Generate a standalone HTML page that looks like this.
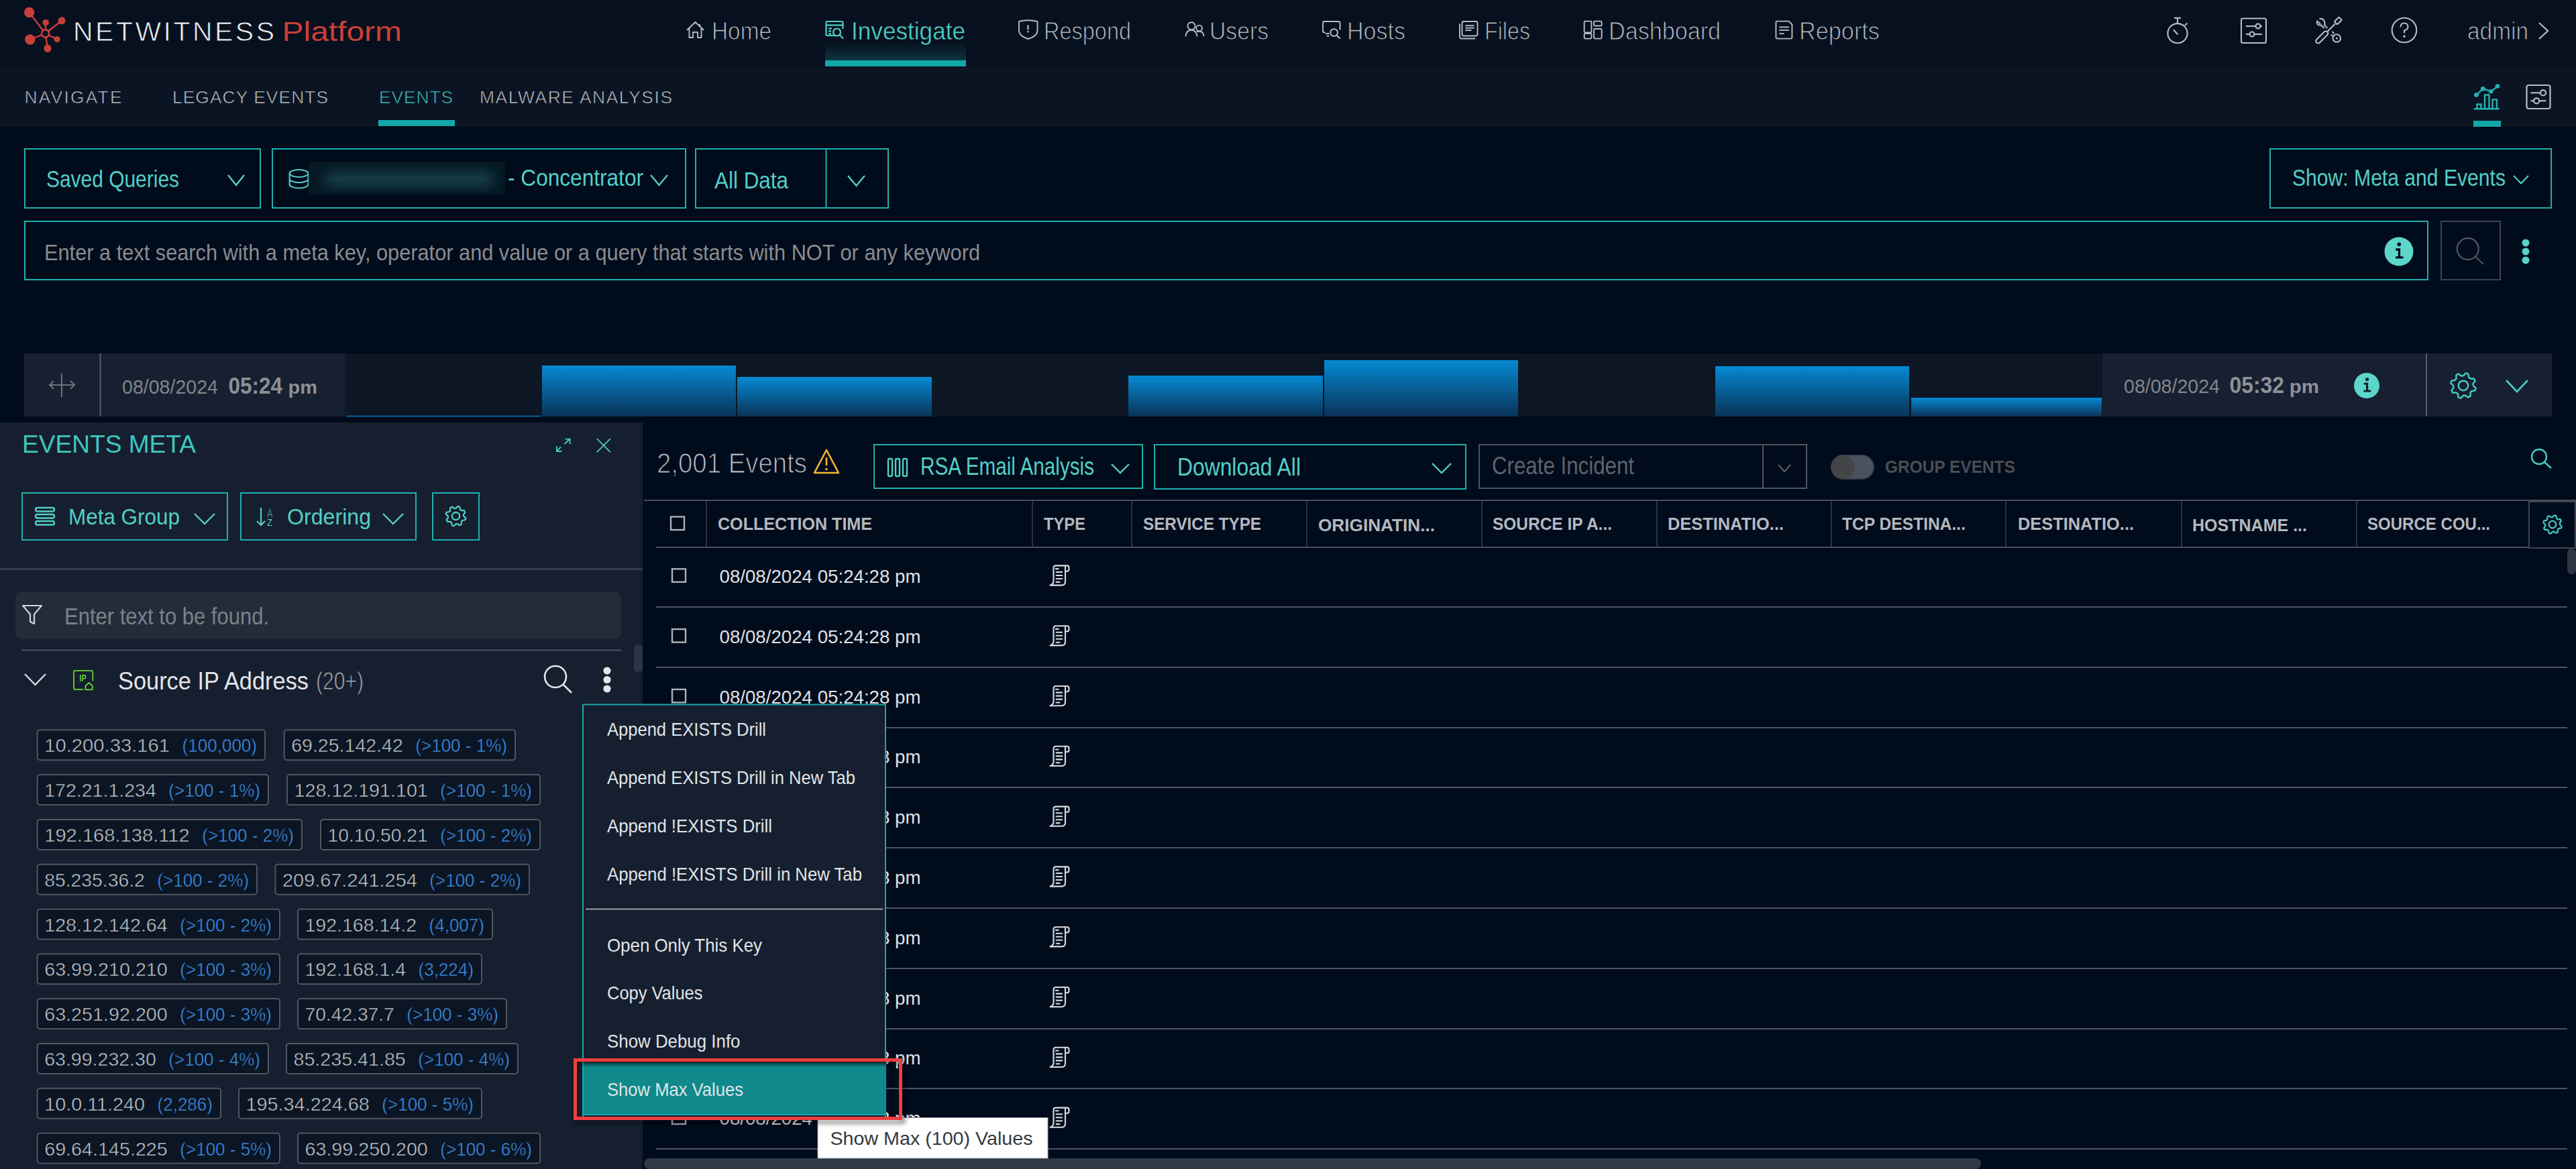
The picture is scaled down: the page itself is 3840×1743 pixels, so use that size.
<!DOCTYPE html>
<html><head><meta charset="utf-8"><title>NetWitness Platform - Events</title>
<style>html,body{margin:0;padding:0;background:#000b1b;overflow:hidden;font-family:"Liberation Sans",sans-serif}svg{display:block}</style></head>
<body><svg width="3840" height="1743" viewBox="0 0 3840 1743">
<rect x="0" y="0" width="3840" height="1743" fill="#000b1b"/>
<rect x="0" y="0" width="3840" height="99" fill="#07101e"/>
<rect x="0" y="99" width="3840" height="90" fill="#0b1423"/>
<g fill="#c9403a" stroke="#c9403a">
<line x1="67.6" y1="50" x2="43.6" y2="18.5" stroke-width="2.4"/>
<circle cx="43.6" cy="18.5" r="7.7" stroke="none"/>
<line x1="67.6" y1="50" x2="68.1" y2="33.7" stroke-width="2.4"/>
<circle cx="68.1" cy="33.7" r="4.8" stroke="none"/>
<line x1="67.6" y1="50" x2="92" y2="30.8" stroke-width="2.4"/>
<circle cx="92" cy="30.8" r="5.5" stroke="none"/>
<line x1="67.6" y1="50" x2="44.8" y2="59" stroke-width="2.4"/>
<circle cx="44.8" cy="59" r="7.7" stroke="none"/>
<line x1="67.6" y1="50" x2="85" y2="58.5" stroke-width="2.4"/>
<circle cx="85" cy="58.5" r="4.6" stroke="none"/>
<line x1="67.6" y1="50" x2="71" y2="72.2" stroke-width="2.4"/>
<circle cx="71" cy="72.2" r="5.6" stroke="none"/>
<circle cx="67.6" cy="50" r="5.6" fill="#07101e" stroke-width="2.6"/>
</g>
<text x="109" y="61" font-family="&quot;Liberation Sans&quot;, sans-serif" font-size="41" fill="#f2f2f2" textLength="300" lengthAdjust="spacing" stroke="#07101e" stroke-width="0.9">NETWITNESS</text>
<text x="420.5" y="61" font-family="&quot;Liberation Sans&quot;, sans-serif" font-size="41" fill="#cc3f36" textLength="178.5" lengthAdjust="spacingAndGlyphs">Platform</text>
<defs><linearGradient id="glow" x1="0" y1="0" x2="0" y2="1"><stop offset="0" stop-color="#07101e" stop-opacity="1"/><stop offset="1" stop-color="#0c3440" stop-opacity="1"/></linearGradient><linearGradient id="bar" x1="0" y1="0" x2="0" y2="1"><stop offset="0" stop-color="#058ad3"/><stop offset="1" stop-color="#0a3358"/></linearGradient></defs>
<rect x="1230" y="63" width="210" height="27" fill="url(#glow)"/>
<rect x="1230" y="90" width="210" height="9" fill="#14a7aa"/>
<text x="1061" y="59" font-family="&quot;Liberation Sans&quot;, sans-serif" font-size="36.6" fill="#b9bcc2" textLength="89" lengthAdjust="spacingAndGlyphs" stroke="#07101e" stroke-width="1.1">Home</text>
<text x="1269" y="59" font-family="&quot;Liberation Sans&quot;, sans-serif" font-size="36.6" fill="#4fd1c8" textLength="170" lengthAdjust="spacingAndGlyphs" stroke="#07101e" stroke-width="0.5">Investigate</text>
<text x="1556" y="59" font-family="&quot;Liberation Sans&quot;, sans-serif" font-size="36.6" fill="#b9bcc2" textLength="130" lengthAdjust="spacingAndGlyphs" stroke="#07101e" stroke-width="1.1">Respond</text>
<text x="1803" y="59" font-family="&quot;Liberation Sans&quot;, sans-serif" font-size="36.6" fill="#b9bcc2" textLength="88" lengthAdjust="spacingAndGlyphs" stroke="#07101e" stroke-width="1.1">Users</text>
<text x="2008" y="59" font-family="&quot;Liberation Sans&quot;, sans-serif" font-size="36.6" fill="#b9bcc2" textLength="87" lengthAdjust="spacingAndGlyphs" stroke="#07101e" stroke-width="1.1">Hosts</text>
<text x="2213" y="59" font-family="&quot;Liberation Sans&quot;, sans-serif" font-size="36.6" fill="#b9bcc2" textLength="68" lengthAdjust="spacingAndGlyphs" stroke="#07101e" stroke-width="1.1">Files</text>
<text x="2398" y="59" font-family="&quot;Liberation Sans&quot;, sans-serif" font-size="36.6" fill="#b9bcc2" textLength="167" lengthAdjust="spacingAndGlyphs" stroke="#07101e" stroke-width="1.1">Dashboard</text>
<text x="2682" y="59" font-family="&quot;Liberation Sans&quot;, sans-serif" font-size="36.6" fill="#b9bcc2" textLength="120" lengthAdjust="spacingAndGlyphs" stroke="#07101e" stroke-width="1.1">Reports</text>
<path d="M1024 45 L1036.5 33 L1049 45 M1027.5 42 V56 H1033 V48 H1040 V56 H1045.5 V42 M1043 36 V39" fill="none" stroke="#b9bcc2" stroke-width="1.9" stroke-linejoin="round"/>
<g fill="none" stroke="#4fd1c8" stroke-width="2.2"><path d="M1246 53 H1233 Q1231.5 53 1231.5 51 V34 Q1231.5 32 1233.5 32 H1254.5 Q1256.5 32 1256.5 34 V43"/><line x1="1232" y1="37.5" x2="1256" y2="37.5"/><line x1="1235" y1="42.5" x2="1240" y2="42.5"/><line x1="1235" y1="46.5" x2="1239" y2="46.5"/><line x1="1235" y1="50.5" x2="1239" y2="50.5"/><circle cx="1247.5" cy="48" r="5.5"/><line x1="1251.5" y1="52" x2="1257" y2="57.5"/></g>
<path d="M1519 32 Q1532.7 28.5 1546.5 32 V45 Q1546.5 54 1532.7 58 Q1519 54 1519 45 Z" fill="none" stroke="#b9bcc2" stroke-width="1.9" stroke-linejoin="round"/><line x1="1532.4" y1="37.5" x2="1532.4" y2="44.5" stroke="#b9bcc2" stroke-width="2.2"/><circle cx="1532.4" cy="47.3" r="1.3" fill="#b9bcc2"/>
<g fill="none" stroke="#b9bcc2" stroke-width="1.9"><circle cx="1776" cy="38.8" r="5.6"/><path d="M1767.5 54.5 Q1768 45 1776 45 Q1784 45 1784.5 54.5"/><circle cx="1787.7" cy="42" r="4.4"/><path d="M1784 47 Q1786 46.8 1788 46.8 Q1794 47 1794.5 54"/></g>
<g fill="none" stroke="#b9bcc2" stroke-width="1.9"><path d="M1975.5 48.5 H1974.5 Q1972 48.5 1972 46 V34.5 Q1972 32 1974.5 32 H1995 Q1997.5 32 1997.5 34.5 V44.5"/><line x1="1976" y1="50" x2="1981.5" y2="50"/><line x1="1977.5" y1="53.5" x2="1981.5" y2="53.5"/><circle cx="1988.6" cy="48.6" r="5.4"/><line x1="1992.5" y1="52.5" x2="1997.5" y2="57.5"/></g>
<g fill="none" stroke="#b9bcc2" stroke-width="1.9"><rect x="2179.5" y="32" width="23" height="21.5" rx="2.5"/><path d="M2176 35.5 V55 Q2176 57.5 2178.5 57.5 H2199"/><line x1="2184.3" y1="38.2" x2="2197.6" y2="38.2"/><line x1="2184.3" y1="41.7" x2="2197.6" y2="41.7"/><line x1="2184.3" y1="45.2" x2="2193.4" y2="45.2"/></g>
<g fill="none" stroke="#b9bcc2" stroke-width="1.9"><rect x="2361.6" y="31.6" width="10.8" height="16.8" rx="1.5"/><rect x="2361.6" y="50" width="10.8" height="7.6" rx="1.5"/><rect x="2376" y="31.6" width="11.6" height="6.9" rx="1.5"/><rect x="2376" y="43" width="11.6" height="14.6" rx="1.5"/></g>
<g fill="none" stroke="#b9bcc2" stroke-width="1.9"><path d="M2649.5 31.6 H2666.5 L2671.4 36.5 V55.5 Q2671.4 57.6 2669.4 57.6 H2649.5 Q2647.4 57.6 2647.4 55.5 V33.7 Q2647.4 31.6 2649.5 31.6 Z"/><line x1="2652.3" y1="40.5" x2="2666.8" y2="40.5"/><line x1="2652.3" y1="45" x2="2666.8" y2="45"/><line x1="2652.3" y1="50.1" x2="2659.5" y2="50.1"/></g>
<g fill="none" stroke="#b9bcc2" stroke-width="2.1"><circle cx="3246" cy="49.7" r="14.6"/><line x1="3241" y1="26.8" x2="3251" y2="26.8"/><line x1="3246" y1="26.8" x2="3246" y2="35"/><line x1="3257" y1="38" x2="3260.5" y2="34.5"/><line x1="3240" y1="44.5" x2="3246.5" y2="51.5"/><rect x="3341" y="27.5" width="37" height="36.5" rx="2.5"/><line x1="3348" y1="39" x2="3372" y2="39"/><circle cx="3366" cy="39" r="3.5" fill="#07101e"/><line x1="3348" y1="51" x2="3372" y2="51"/><circle cx="3357" cy="51" r="3.5" fill="#07101e"/><rect x="-11.4" y="-3.3" width="22.8" height="6.6" rx="3.3" transform="translate(3461.3 55.5) rotate(-45)"/><line x1="3469.5" y1="47" x2="3481" y2="35.5"/><rect x="-4.8" y="-3" width="9.6" height="6" rx="1" transform="translate(3485.3 31) rotate(-45)"/><path d="M3457.5 28 Q3462.5 27 3465 31.5 Q3466 35 3465 37.5 L3469.5 42 M3464.5 42 L3460 37.5 Q3456 38.5 3454 35.5 Q3453 33.5 3454.5 31.5 L3459 36"/><line x1="3476.5" y1="47" x2="3479.5" y2="50"/><line x1="3475" y1="51.5" x2="3478" y2="54.5"/><circle cx="3483.3" cy="57" r="5.8"/><circle cx="3584" cy="45" r="18.3"/><path d="M3578.5 40.5 Q3578.5 34.5 3584 34.5 Q3589.5 34.5 3589.5 40 Q3589.5 44 3584 45.5 V49.5"/></g><circle cx="3483.3" cy="57" r="1.6" fill="#b9bcc2"/><circle cx="3584" cy="54.2" r="1.7" fill="#b9bcc2"/>
<text x="3678" y="59" font-family="&quot;Liberation Sans&quot;, sans-serif" font-size="36.6" fill="#b9bcc2" textLength="91" lengthAdjust="spacingAndGlyphs" stroke="#07101e" stroke-width="1.1">admin</text>
<path d="M3785 34 L3798 46 L3785 58" fill="none" stroke="#b9bcc2" stroke-width="2.2"/>
<text x="36.5" y="154" font-family="&quot;Liberation Sans&quot;, sans-serif" font-size="26.4" fill="#c4c8cd" textLength="145" lengthAdjust="spacing" stroke="#0b1423" stroke-width="0.7">NAVIGATE</text>
<text x="257" y="154" font-family="&quot;Liberation Sans&quot;, sans-serif" font-size="26.4" fill="#c4c8cd" textLength="232" lengthAdjust="spacing" stroke="#0b1423" stroke-width="0.7">LEGACY EVENTS</text>
<text x="565" y="154" font-family="&quot;Liberation Sans&quot;, sans-serif" font-size="26.4" fill="#3fc6c1" textLength="110" lengthAdjust="spacing" stroke="#0b1423" stroke-width="0.7">EVENTS</text>
<text x="715" y="154" font-family="&quot;Liberation Sans&quot;, sans-serif" font-size="26.4" fill="#c4c8cd" textLength="287" lengthAdjust="spacing" stroke="#0b1423" stroke-width="0.7">MALWARE ANALYSIS</text>
<rect x="564" y="179" width="114" height="9" fill="#14a7aa"/>
<rect x="3669.5" y="99" width="1.2" height="90" fill="#08111e"/>
<g fill="none" stroke="#22b3b0" stroke-width="2.4"><polyline points="3691.5,141.6 3701.3,132.4 3713.3,136.2 3723,128.6"/><line x1="3688.8" y1="162.3" x2="3724.7" y2="162.3" stroke-linecap="round"/><path d="M3692.5 162 V155.5 H3698.5 V162 M3704 162 V141.5 H3710.5 V162 M3715.5 162 V148.5 H3722 V162"/></g><g fill="#22b3b0"><circle cx="3691.5" cy="141.6" r="3.3"/><circle cx="3701.3" cy="132.4" r="3.3"/><circle cx="3713.3" cy="136.2" r="3.3"/><circle cx="3723" cy="128.6" r="3.3"/></g>
<rect x="3687" y="180" width="41" height="9" fill="#14a7aa"/>
<g fill="none" stroke="#b9bcc2" stroke-width="2.2"><rect x="3766.5" y="127" width="35" height="35" rx="3"/><line x1="3772.5" y1="138.4" x2="3795.3" y2="138.4"/><circle cx="3791" cy="138.4" r="4" fill="#0b1423"/><line x1="3772.5" y1="150.3" x2="3795.3" y2="150.3"/><circle cx="3781.2" cy="150.3" r="4" fill="#0b1423"/></g>
<rect x="37.0" y="222.0" width="351" height="88" fill="none" stroke="#1fb0ae" stroke-width="2"/>
<text x="69" y="278.6" font-family="&quot;Liberation Sans&quot;, sans-serif" font-size="35.7" fill="#52cfc6" textLength="198" lengthAdjust="spacingAndGlyphs">Saved Queries</text>
<polyline points="340,261 352.0,276 364,261" fill="none" stroke="#52cfc6" stroke-width="2.4"/>
<rect x="406.0" y="222.0" width="616" height="88" fill="none" stroke="#1fb0ae" stroke-width="2"/>
<g fill="none" stroke="#52cfc6" stroke-width="2.1"><ellipse cx="445.6" cy="258.5" rx="14" ry="5.5"/><path d="M431.6 258.5 V275 A14 5.5 0 0 0 459.6 275 V258.5 M431.6 266.7 A14 5.5 0 0 0 459.6 266.7"/></g>
<defs><filter id="blur" x="-20%" y="-50%" width="140%" height="200%"><feGaussianBlur stdDeviation="9"/></filter></defs>
<clipPath id="bclip"><rect x="460" y="241" width="293" height="49"/></clipPath>
<rect x="460" y="241" width="293" height="49" fill="#061822"/>
<g filter="url(#blur)" clip-path="url(#bclip)"><rect x="485" y="256" width="250" height="22" fill="#17414c"/></g>
<text x="757" y="277" font-family="&quot;Liberation Sans&quot;, sans-serif" font-size="35.7" fill="#52cfc6" textLength="202" lengthAdjust="spacingAndGlyphs">- Concentrator</text>
<polyline points="970,261 982.5,276 995,261" fill="none" stroke="#52cfc6" stroke-width="2.4"/>
<rect x="1037.0" y="222.0" width="287" height="88" fill="none" stroke="#1fb0ae" stroke-width="2"/>
<line x1="1231.5" y1="221" x2="1231.5" y2="311" stroke="#1fb0ae" stroke-width="2"/>
<text x="1065" y="281" font-family="&quot;Liberation Sans&quot;, sans-serif" font-size="35.7" fill="#52cfc6" textLength="110" lengthAdjust="spacingAndGlyphs">All Data</text>
<polyline points="1264,262 1276.5,277 1289,262" fill="none" stroke="#52cfc6" stroke-width="2.4"/>
<rect x="3384.0" y="222.0" width="419" height="88" fill="none" stroke="#1fb0ae" stroke-width="2"/>
<text x="3417" y="276.7" font-family="&quot;Liberation Sans&quot;, sans-serif" font-size="35.7" fill="#52cfc6" textLength="318" lengthAdjust="spacingAndGlyphs">Show: Meta and Events</text>
<polyline points="3747,262 3758.0,273.5 3769,262" fill="none" stroke="#52cfc6" stroke-width="2.2"/>
<rect x="37.0" y="330.0" width="3582" height="87" fill="none" stroke="#1fb0ae" stroke-width="2"/>
<text x="66" y="388" font-family="&quot;Liberation Sans&quot;, sans-serif" font-size="33.7" fill="#8a8c90" textLength="1395" lengthAdjust="spacingAndGlyphs">Enter a text search with a meta key, operator and value or a query that starts with NOT or any keyword</text>
<circle cx="3576" cy="375" r="21.5" fill="#5cd5cb"/>
<g fill="none" stroke="#000b1b" stroke-width="3.3" stroke-linecap="round"><path d="M3572.5 372 H3576.5 V383.8 M3572.3 383.8 H3581.3"/></g><circle cx="3576.3" cy="364.3" r="2.8" fill="#000b1b"/>
<rect x="3639.0" y="330.0" width="88" height="87" fill="none" stroke="#3c4450" stroke-width="2"/>
<g fill="none" stroke="#50565e" stroke-width="2.2"><circle cx="3678.8" cy="371.2" r="16"/><line x1="3690.5" y1="383" x2="3702" y2="394"/></g>
<circle cx="3765" cy="362" r="5.5" fill="#5ad2c9"/>
<circle cx="3765" cy="375" r="5.5" fill="#5ad2c9"/>
<circle cx="3765" cy="388" r="5.5" fill="#5ad2c9"/>
<rect x="36" y="527" width="3768" height="94" fill="#0c1624"/>
<rect x="36" y="527" width="478" height="94" fill="#172030"/>
<line x1="149.5" y1="527" x2="149.5" y2="621" stroke="#5a5f67" stroke-width="2"/>
<g fill="none" stroke="#6e737b" stroke-width="2"><line x1="74" y1="574" x2="111" y2="574"/><line x1="92" y1="557" x2="92" y2="592"/><polyline points="80,568 74,574 80,580"/><polyline points="105,568 111,574 105,580"/></g>
<text x="182" y="586.5" font-family="&quot;Liberation Sans&quot;, sans-serif" font-size="30.0" fill="#80858c" textLength="143" lengthAdjust="spacingAndGlyphs">08/08/2024</text>
<text x="340.5" y="586.5" font-family="&quot;Liberation Sans&quot;, sans-serif" font-size="35.0" fill="#8c9097" font-weight="700" textLength="80.5" lengthAdjust="spacingAndGlyphs">05:24</text>
<text x="429.5" y="586.5" font-family="&quot;Liberation Sans&quot;, sans-serif" font-size="28.0" fill="#8c9097" font-weight="700" textLength="43.5" lengthAdjust="spacingAndGlyphs">pm</text>
<rect x="808" y="545" width="289" height="76" fill="url(#bar)"/>
<rect x="1099" y="562" width="290" height="59" fill="url(#bar)"/>
<rect x="1682" y="560" width="290" height="61" fill="url(#bar)"/>
<rect x="1974" y="537" width="289" height="84" fill="url(#bar)"/>
<rect x="2557" y="546" width="289" height="75" fill="url(#bar)"/>
<rect x="2849" y="593" width="284" height="28" fill="url(#bar)"/>
<line x1="516" y1="620.5" x2="806" y2="620.5" stroke="#0a7bc0" stroke-width="1.5"/>
<rect x="3134" y="527" width="670" height="94" fill="#172030"/>
<line x1="3617" y1="527" x2="3617" y2="621" stroke="#5a5f67" stroke-width="2"/>
<text x="3166" y="586" font-family="&quot;Liberation Sans&quot;, sans-serif" font-size="30.0" fill="#80858c" textLength="143" lengthAdjust="spacingAndGlyphs">08/08/2024</text>
<text x="3323.6" y="586" font-family="&quot;Liberation Sans&quot;, sans-serif" font-size="35.0" fill="#8c9097" font-weight="700" textLength="81.4" lengthAdjust="spacingAndGlyphs">05:32</text>
<text x="3412.7" y="586" font-family="&quot;Liberation Sans&quot;, sans-serif" font-size="28.0" fill="#8c9097" font-weight="700" textLength="44.3" lengthAdjust="spacingAndGlyphs">pm</text>
<circle cx="3528" cy="575" r="19" fill="#5cd5cb"/>
<g fill="none" stroke="#172030" stroke-width="3.1" stroke-linecap="round"><path d="M3525 572 H3528.6 V583 M3524.6 583 H3533"/></g><circle cx="3528.6" cy="565.5" r="2.6" fill="#172030"/>
<polygon points="3686.8,575.0 3690.6,578.7 3689.6,582.3 3684.3,583.2 3682.5,585.5 3682.6,590.8 3679.3,592.6 3674.9,589.5 3672.0,589.8 3668.3,593.6 3664.7,592.6 3663.8,587.3 3661.5,585.5 3656.2,585.6 3654.4,582.3 3657.5,577.9 3657.2,575.0 3653.4,571.3 3654.4,567.7 3659.7,566.8 3661.5,564.5 3661.4,559.2 3664.7,557.4 3669.1,560.5 3672.0,560.2 3675.7,556.4 3679.3,557.4 3680.2,562.7 3682.5,564.5 3687.8,564.4 3689.6,567.7 3686.5,572.1" fill="none" stroke="#45cbc4" stroke-width="2.4" stroke-linejoin="round"/><circle cx="3672" cy="575" r="7.2" fill="none" stroke="#45cbc4" stroke-width="2.4"/>
<polyline points="3736,567 3752.0,584 3768,567" fill="none" stroke="#45cbc4" stroke-width="2.6"/>
<rect x="0" y="630" width="958" height="1113" fill="#161f2f"/>
<text x="33" y="674.6" font-family="&quot;Liberation Sans&quot;, sans-serif" font-size="37.7" fill="#3fc6c1" textLength="259" lengthAdjust="spacingAndGlyphs">EVENTS META</text>
<g fill="none" stroke="#45cbc4" stroke-width="1.8"><line x1="830.5" y1="672" x2="836" y2="666.5"/><polyline points="830,665 830,673 837.5,673"/><line x1="841.5" y1="662" x2="849" y2="655"/><polyline points="842.5,654.6 849.6,654.6 849.6,662"/><line x1="889.8" y1="654.2" x2="909.8" y2="674.2"/><line x1="909.8" y1="654.2" x2="889.8" y2="674.2"/></g>
<rect x="33.0" y="735.0" width="306" height="70" fill="none" stroke="#1fb0ae" stroke-width="2"/>
<g fill="none" stroke="#52cfc6" stroke-width="2.4"><rect x="53" y="757" width="28" height="5.5" rx="2.7"/><rect x="53" y="767" width="28" height="5.5" rx="2.7"/><rect x="53" y="777" width="28" height="5.5" rx="2.7"/></g>
<text x="102" y="781.8" font-family="&quot;Liberation Sans&quot;, sans-serif" font-size="34.0" fill="#52cfc6" textLength="166" lengthAdjust="spacingAndGlyphs">Meta Group</text>
<polyline points="290,766 305.0,781 320,766" fill="none" stroke="#52cfc6" stroke-width="2.4"/>
<rect x="359.0" y="735.0" width="261" height="70" fill="none" stroke="#1fb0ae" stroke-width="2"/>
<g fill="none" stroke="#52cfc6" stroke-width="2.2"><line x1="389" y1="757" x2="389" y2="783"/><polyline points="383,777 389,783 395,777"/></g>
<text x="398" y="771.5" font-family="&quot;Liberation Sans&quot;, sans-serif" font-size="20" fill="#52cfc6" textLength="8.5" lengthAdjust="spacingAndGlyphs" stroke="#161f2f" stroke-width="0.8">A</text>
<text x="398" y="784" font-family="&quot;Liberation Sans&quot;, sans-serif" font-size="14" fill="#52cfc6" textLength="8" lengthAdjust="spacingAndGlyphs">Z</text>
<text x="428" y="781.8" font-family="&quot;Liberation Sans&quot;, sans-serif" font-size="34.0" fill="#52cfc6" textLength="125" lengthAdjust="spacingAndGlyphs">Ordering</text>
<polyline points="571,766 586.0,781 601,766" fill="none" stroke="#52cfc6" stroke-width="2.4"/>
<rect x="645.0" y="735.0" width="69" height="70" fill="none" stroke="#1fb0ae" stroke-width="2"/>
<polygon points="691.2,769.5 694.2,772.4 693.4,775.2 689.2,776.0 687.8,777.8 687.8,782.0 685.2,783.4 681.8,781.0 679.5,781.2 676.6,784.2 673.8,783.4 673.0,779.2 671.2,777.8 667.0,777.8 665.6,775.2 668.0,771.8 667.8,769.5 664.8,766.6 665.6,763.8 669.8,763.0 671.2,761.2 671.2,757.0 673.8,755.6 677.2,758.0 679.5,757.8 682.4,754.8 685.2,755.6 686.0,759.8 687.8,761.2 692.0,761.2 693.4,763.8 691.0,767.2" fill="none" stroke="#52cfc6" stroke-width="2.2" stroke-linejoin="round"/><circle cx="679.5" cy="769.5" r="5.7" fill="none" stroke="#52cfc6" stroke-width="2.2"/>
<line x1="0" y1="848.5" x2="958" y2="848.5" stroke="#404956" stroke-width="2"/>
<rect x="23" y="882" width="903" height="71" fill="#232c39" rx="10"/>
<path d="M34 903 H62 L51 916 V930 L45 927 V916 Z" fill="none" stroke="#d0d3d7" stroke-width="2.2" stroke-linejoin="round"/>
<text x="96" y="930.5" font-family="&quot;Liberation Sans&quot;, sans-serif" font-size="35.0" fill="#7c8189" textLength="305" lengthAdjust="spacingAndGlyphs">Enter text to be found.</text>
<line x1="32" y1="969.5" x2="926" y2="969.5" stroke="#4b5360" stroke-width="2"/>
<rect x="945" y="961" width="13" height="41" fill="#2c3541" rx="6"/>
<polyline points="37,1005 52.5,1021 68,1005" fill="none" stroke="#d5d8dc" stroke-width="2.4"/>
<path d="M124.5 1028 H112 Q110 1028 110 1026 V1002 Q110 1000 112 1000 H136.3 Q138.3 1000 138.3 1002 V1015.5" fill="none" stroke="#5fc13a" stroke-width="2"/>
<path d="M127.5 1028.3 V1022.5 L132.6 1018 L137.8 1022.5 V1028.3 Z" fill="none" stroke="#5fc13a" stroke-width="2" stroke-linejoin="round"/>
<text x="118.2" y="1016" font-family="&quot;Liberation Sans&quot;, sans-serif" font-size="14.5" fill="#5fc13a" font-weight="700" textLength="10.5" lengthAdjust="spacingAndGlyphs">IP</text>
<text x="176" y="1028.3" font-family="&quot;Liberation Sans&quot;, sans-serif" font-size="37.6" fill="#e3e5e8" textLength="284" lengthAdjust="spacingAndGlyphs">Source IP Address</text>
<text x="471" y="1028.3" font-family="&quot;Liberation Sans&quot;, sans-serif" font-size="37.6" fill="#a9adb2" textLength="71" lengthAdjust="spacingAndGlyphs" stroke="#161f2f" stroke-width="1">(20+)</text>
<g fill="none" stroke="#e3e5e8" stroke-width="2.6"><circle cx="828" cy="1009" r="16"/><line x1="840" y1="1021" x2="852" y2="1033"/></g>
<circle cx="905" cy="1000" r="5.6" fill="#e3e5e8"/>
<circle cx="905" cy="1013.5" r="5.6" fill="#e3e5e8"/>
<circle cx="905" cy="1027" r="5.6" fill="#e3e5e8"/>
<rect x="55.7" y="1088.3" width="339.3" height="45.0" fill="#0b1524" stroke="#50565e" stroke-width="2" rx="4"/>
<text x="66.2" y="1121.3" font-family="&quot;Liberation Sans&quot;, sans-serif" font-size="27.7" fill="#c0c3c7" textLength="186.9" lengthAdjust="spacingAndGlyphs" stroke="#0b1524" stroke-width="0.5">10.200.33.161</text>
<text x="271.6" y="1121.3" font-family="&quot;Liberation Sans&quot;, sans-serif" font-size="27.7" fill="#3d8fe6" textLength="111.4" lengthAdjust="spacingAndGlyphs" stroke="#0b1524" stroke-width="0.5">(100,000)</text>
<rect x="423.7" y="1088.3" width="344.3" height="45.0" fill="#0b1524" stroke="#50565e" stroke-width="2" rx="4"/>
<text x="434.2" y="1121.3" font-family="&quot;Liberation Sans&quot;, sans-serif" font-size="27.7" fill="#c0c3c7" textLength="166.6" lengthAdjust="spacingAndGlyphs" stroke="#0b1524" stroke-width="0.5">69.25.142.42</text>
<text x="619.3" y="1121.3" font-family="&quot;Liberation Sans&quot;, sans-serif" font-size="27.7" fill="#3d8fe6" textLength="136.7" lengthAdjust="spacingAndGlyphs" stroke="#0b1524" stroke-width="0.5">(&gt;100 - 1%)</text>
<rect x="55.7" y="1155.1" width="344.3" height="45.0" fill="#0b1524" stroke="#50565e" stroke-width="2" rx="4"/>
<text x="66.2" y="1188.1" font-family="&quot;Liberation Sans&quot;, sans-serif" font-size="27.7" fill="#c0c3c7" textLength="166.6" lengthAdjust="spacingAndGlyphs" stroke="#0b1524" stroke-width="0.5">172.21.1.234</text>
<text x="251.3" y="1188.1" font-family="&quot;Liberation Sans&quot;, sans-serif" font-size="27.7" fill="#3d8fe6" textLength="136.7" lengthAdjust="spacingAndGlyphs" stroke="#0b1524" stroke-width="0.5">(&gt;100 - 1%)</text>
<rect x="428.0" y="1155.1" width="377" height="45.0" fill="#0b1524" stroke="#50565e" stroke-width="2" rx="4"/>
<text x="438.5" y="1188.1" font-family="&quot;Liberation Sans&quot;, sans-serif" font-size="27.7" fill="#c0c3c7" textLength="199.3" lengthAdjust="spacingAndGlyphs" stroke="#0b1524" stroke-width="0.5">128.12.191.101</text>
<text x="656.3" y="1188.1" font-family="&quot;Liberation Sans&quot;, sans-serif" font-size="27.7" fill="#3d8fe6" textLength="136.7" lengthAdjust="spacingAndGlyphs" stroke="#0b1524" stroke-width="0.5">(&gt;100 - 1%)</text>
<rect x="55.7" y="1221.8999999999999" width="394.3" height="45.0" fill="#0b1524" stroke="#50565e" stroke-width="2" rx="4"/>
<text x="66.2" y="1254.8999999999999" font-family="&quot;Liberation Sans&quot;, sans-serif" font-size="27.7" fill="#c0c3c7" textLength="216.6" lengthAdjust="spacingAndGlyphs" stroke="#0b1524" stroke-width="0.5">192.168.138.112</text>
<text x="301.3" y="1254.8999999999999" font-family="&quot;Liberation Sans&quot;, sans-serif" font-size="27.7" fill="#3d8fe6" textLength="136.7" lengthAdjust="spacingAndGlyphs" stroke="#0b1524" stroke-width="0.5">(&gt;100 - 2%)</text>
<rect x="478.0" y="1221.8999999999999" width="327" height="45.0" fill="#0b1524" stroke="#50565e" stroke-width="2" rx="4"/>
<text x="488.5" y="1254.8999999999999" font-family="&quot;Liberation Sans&quot;, sans-serif" font-size="27.7" fill="#c0c3c7" textLength="149.3" lengthAdjust="spacingAndGlyphs" stroke="#0b1524" stroke-width="0.5">10.10.50.21</text>
<text x="656.3" y="1254.8999999999999" font-family="&quot;Liberation Sans&quot;, sans-serif" font-size="27.7" fill="#3d8fe6" textLength="136.7" lengthAdjust="spacingAndGlyphs" stroke="#0b1524" stroke-width="0.5">(&gt;100 - 2%)</text>
<rect x="55.7" y="1288.6999999999998" width="327.3" height="45.0" fill="#0b1524" stroke="#50565e" stroke-width="2" rx="4"/>
<text x="66.2" y="1321.6999999999998" font-family="&quot;Liberation Sans&quot;, sans-serif" font-size="27.7" fill="#c0c3c7" textLength="149.6" lengthAdjust="spacingAndGlyphs" stroke="#0b1524" stroke-width="0.5">85.235.36.2</text>
<text x="234.3" y="1321.6999999999998" font-family="&quot;Liberation Sans&quot;, sans-serif" font-size="27.7" fill="#3d8fe6" textLength="136.7" lengthAdjust="spacingAndGlyphs" stroke="#0b1524" stroke-width="0.5">(&gt;100 - 2%)</text>
<rect x="410.5" y="1288.6999999999998" width="378.5" height="45.0" fill="#0b1524" stroke="#50565e" stroke-width="2" rx="4"/>
<text x="421.0" y="1321.6999999999998" font-family="&quot;Liberation Sans&quot;, sans-serif" font-size="27.7" fill="#c0c3c7" textLength="200.8" lengthAdjust="spacingAndGlyphs" stroke="#0b1524" stroke-width="0.5">209.67.241.254</text>
<text x="640.3" y="1321.6999999999998" font-family="&quot;Liberation Sans&quot;, sans-serif" font-size="27.7" fill="#3d8fe6" textLength="136.7" lengthAdjust="spacingAndGlyphs" stroke="#0b1524" stroke-width="0.5">(&gt;100 - 2%)</text>
<rect x="55.7" y="1355.5" width="361.3" height="45.0" fill="#0b1524" stroke="#50565e" stroke-width="2" rx="4"/>
<text x="66.2" y="1388.5" font-family="&quot;Liberation Sans&quot;, sans-serif" font-size="27.7" fill="#c0c3c7" textLength="183.6" lengthAdjust="spacingAndGlyphs" stroke="#0b1524" stroke-width="0.5">128.12.142.64</text>
<text x="268.3" y="1388.5" font-family="&quot;Liberation Sans&quot;, sans-serif" font-size="27.7" fill="#3d8fe6" textLength="136.7" lengthAdjust="spacingAndGlyphs" stroke="#0b1524" stroke-width="0.5">(&gt;100 - 2%)</text>
<rect x="444.0" y="1355.5" width="290" height="45.0" fill="#0b1524" stroke="#50565e" stroke-width="2" rx="4"/>
<text x="454.5" y="1388.5" font-family="&quot;Liberation Sans&quot;, sans-serif" font-size="27.7" fill="#c0c3c7" textLength="166.5" lengthAdjust="spacingAndGlyphs" stroke="#0b1524" stroke-width="0.5">192.168.14.2</text>
<text x="639.5" y="1388.5" font-family="&quot;Liberation Sans&quot;, sans-serif" font-size="27.7" fill="#3d8fe6" textLength="82.5" lengthAdjust="spacingAndGlyphs" stroke="#0b1524" stroke-width="0.5">(4,007)</text>
<rect x="55.7" y="1422.3" width="361.3" height="45.0" fill="#0b1524" stroke="#50565e" stroke-width="2" rx="4"/>
<text x="66.2" y="1455.3" font-family="&quot;Liberation Sans&quot;, sans-serif" font-size="27.7" fill="#c0c3c7" textLength="183.6" lengthAdjust="spacingAndGlyphs" stroke="#0b1524" stroke-width="0.5">63.99.210.210</text>
<text x="268.3" y="1455.3" font-family="&quot;Liberation Sans&quot;, sans-serif" font-size="27.7" fill="#3d8fe6" textLength="136.7" lengthAdjust="spacingAndGlyphs" stroke="#0b1524" stroke-width="0.5">(&gt;100 - 3%)</text>
<rect x="444.0" y="1422.3" width="274" height="45.0" fill="#0b1524" stroke="#50565e" stroke-width="2" rx="4"/>
<text x="454.5" y="1455.3" font-family="&quot;Liberation Sans&quot;, sans-serif" font-size="27.7" fill="#c0c3c7" textLength="150.5" lengthAdjust="spacingAndGlyphs" stroke="#0b1524" stroke-width="0.5">192.168.1.4</text>
<text x="623.5" y="1455.3" font-family="&quot;Liberation Sans&quot;, sans-serif" font-size="27.7" fill="#3d8fe6" textLength="82.5" lengthAdjust="spacingAndGlyphs" stroke="#0b1524" stroke-width="0.5">(3,224)</text>
<rect x="55.7" y="1489.1" width="361.3" height="45.0" fill="#0b1524" stroke="#50565e" stroke-width="2" rx="4"/>
<text x="66.2" y="1522.1" font-family="&quot;Liberation Sans&quot;, sans-serif" font-size="27.7" fill="#c0c3c7" textLength="183.6" lengthAdjust="spacingAndGlyphs" stroke="#0b1524" stroke-width="0.5">63.251.92.200</text>
<text x="268.3" y="1522.1" font-family="&quot;Liberation Sans&quot;, sans-serif" font-size="27.7" fill="#3d8fe6" textLength="136.7" lengthAdjust="spacingAndGlyphs" stroke="#0b1524" stroke-width="0.5">(&gt;100 - 3%)</text>
<rect x="444.0" y="1489.1" width="311" height="45.0" fill="#0b1524" stroke="#50565e" stroke-width="2" rx="4"/>
<text x="454.5" y="1522.1" font-family="&quot;Liberation Sans&quot;, sans-serif" font-size="27.7" fill="#c0c3c7" textLength="133.3" lengthAdjust="spacingAndGlyphs" stroke="#0b1524" stroke-width="0.5">70.42.37.7</text>
<text x="606.3" y="1522.1" font-family="&quot;Liberation Sans&quot;, sans-serif" font-size="27.7" fill="#3d8fe6" textLength="136.7" lengthAdjust="spacingAndGlyphs" stroke="#0b1524" stroke-width="0.5">(&gt;100 - 3%)</text>
<rect x="55.7" y="1555.8999999999999" width="344.3" height="45.0" fill="#0b1524" stroke="#50565e" stroke-width="2" rx="4"/>
<text x="66.2" y="1588.8999999999999" font-family="&quot;Liberation Sans&quot;, sans-serif" font-size="27.7" fill="#c0c3c7" textLength="166.6" lengthAdjust="spacingAndGlyphs" stroke="#0b1524" stroke-width="0.5">63.99.232.30</text>
<text x="251.3" y="1588.8999999999999" font-family="&quot;Liberation Sans&quot;, sans-serif" font-size="27.7" fill="#3d8fe6" textLength="136.7" lengthAdjust="spacingAndGlyphs" stroke="#0b1524" stroke-width="0.5">(&gt;100 - 4%)</text>
<rect x="427.0" y="1555.8999999999999" width="345" height="45.0" fill="#0b1524" stroke="#50565e" stroke-width="2" rx="4"/>
<text x="437.5" y="1588.8999999999999" font-family="&quot;Liberation Sans&quot;, sans-serif" font-size="27.7" fill="#c0c3c7" textLength="167.3" lengthAdjust="spacingAndGlyphs" stroke="#0b1524" stroke-width="0.5">85.235.41.85</text>
<text x="623.3" y="1588.8999999999999" font-family="&quot;Liberation Sans&quot;, sans-serif" font-size="27.7" fill="#3d8fe6" textLength="136.7" lengthAdjust="spacingAndGlyphs" stroke="#0b1524" stroke-width="0.5">(&gt;100 - 4%)</text>
<rect x="55.7" y="1622.6999999999998" width="273.3" height="45.0" fill="#0b1524" stroke="#50565e" stroke-width="2" rx="4"/>
<text x="66.2" y="1655.6999999999998" font-family="&quot;Liberation Sans&quot;, sans-serif" font-size="27.7" fill="#c0c3c7" textLength="149.8" lengthAdjust="spacingAndGlyphs" stroke="#0b1524" stroke-width="0.5">10.0.11.240</text>
<text x="234.5" y="1655.6999999999998" font-family="&quot;Liberation Sans&quot;, sans-serif" font-size="27.7" fill="#3d8fe6" textLength="82.5" lengthAdjust="spacingAndGlyphs" stroke="#0b1524" stroke-width="0.5">(2,286)</text>
<rect x="356.0" y="1622.6999999999998" width="362" height="45.0" fill="#0b1524" stroke="#50565e" stroke-width="2" rx="4"/>
<text x="366.5" y="1655.6999999999998" font-family="&quot;Liberation Sans&quot;, sans-serif" font-size="27.7" fill="#c0c3c7" textLength="184.3" lengthAdjust="spacingAndGlyphs" stroke="#0b1524" stroke-width="0.5">195.34.224.68</text>
<text x="569.3" y="1655.6999999999998" font-family="&quot;Liberation Sans&quot;, sans-serif" font-size="27.7" fill="#3d8fe6" textLength="136.7" lengthAdjust="spacingAndGlyphs" stroke="#0b1524" stroke-width="0.5">(&gt;100 - 5%)</text>
<rect x="55.7" y="1689.5" width="361.3" height="45.0" fill="#0b1524" stroke="#50565e" stroke-width="2" rx="4"/>
<text x="66.2" y="1722.5" font-family="&quot;Liberation Sans&quot;, sans-serif" font-size="27.7" fill="#c0c3c7" textLength="183.6" lengthAdjust="spacingAndGlyphs" stroke="#0b1524" stroke-width="0.5">69.64.145.225</text>
<text x="268.3" y="1722.5" font-family="&quot;Liberation Sans&quot;, sans-serif" font-size="27.7" fill="#3d8fe6" textLength="136.7" lengthAdjust="spacingAndGlyphs" stroke="#0b1524" stroke-width="0.5">(&gt;100 - 5%)</text>
<rect x="444.0" y="1689.5" width="361" height="45.0" fill="#0b1524" stroke="#50565e" stroke-width="2" rx="4"/>
<text x="454.5" y="1722.5" font-family="&quot;Liberation Sans&quot;, sans-serif" font-size="27.7" fill="#c0c3c7" textLength="183.3" lengthAdjust="spacingAndGlyphs" stroke="#0b1524" stroke-width="0.5">63.99.250.200</text>
<text x="656.3" y="1722.5" font-family="&quot;Liberation Sans&quot;, sans-serif" font-size="27.7" fill="#3d8fe6" textLength="136.7" lengthAdjust="spacingAndGlyphs" stroke="#0b1524" stroke-width="0.5">(&gt;100 - 6%)</text>
<text x="979" y="705" font-family="&quot;Liberation Sans&quot;, sans-serif" font-size="42.3" fill="#b9bcc2" textLength="224" lengthAdjust="spacingAndGlyphs" stroke="#000b1b" stroke-width="1.2">2,001 Events</text>
<g fill="none" stroke="#f0b731" stroke-width="2.6" stroke-linejoin="round"><path d="M1232 671 L1250 705 H1214 Z"/><line x1="1232" y1="682" x2="1232" y2="694"/></g><circle cx="1232" cy="699.5" r="1.8" fill="#f0b731"/>
<rect x="1303.0" y="663.0" width="400" height="65" fill="none" stroke="#1fb0ae" stroke-width="2"/>
<g fill="none" stroke="#52cfc6" stroke-width="2.4"><rect x="1324" y="684" width="6" height="26" rx="2"/><rect x="1335" y="684" width="6" height="26" rx="2"/><rect x="1346" y="684" width="6" height="26" rx="2"/></g>
<text x="1372" y="708" font-family="&quot;Liberation Sans&quot;, sans-serif" font-size="36.4" fill="#52cfc6" textLength="259" lengthAdjust="spacingAndGlyphs">RSA Email Analysis</text>
<polyline points="1657,692 1670.0,705 1683,692" fill="none" stroke="#52cfc6" stroke-width="2.4"/>
<rect x="1721.0" y="663.0" width="464" height="66" fill="none" stroke="#1fb0ae" stroke-width="2"/>
<text x="1755" y="709" font-family="&quot;Liberation Sans&quot;, sans-serif" font-size="36.4" fill="#52cfc6" textLength="184" lengthAdjust="spacingAndGlyphs">Download All</text>
<polyline points="2135,691 2149.0,705 2163,691" fill="none" stroke="#52cfc6" stroke-width="2.4"/>
<rect x="2205.0" y="663.0" width="488" height="65" fill="none" stroke="#4d5460" stroke-width="2"/>
<line x1="2628" y1="662" x2="2628" y2="729" stroke="#4d5460" stroke-width="2"/>
<text x="2224" y="707" font-family="&quot;Liberation Sans&quot;, sans-serif" font-size="36.4" fill="#5d636b" textLength="212" lengthAdjust="spacingAndGlyphs">Create Incident</text>
<polyline points="2651,693 2660.0,703 2669,693" fill="none" stroke="#5d636b" stroke-width="2"/>
<rect x="2730" y="679" width="63" height="35" fill="#4a5260" stroke="#3b414b" stroke-width="2" rx="17.5"/>
<circle cx="2747.5" cy="696.5" r="17.5" fill="#444546"/>
<text x="2810" y="705" font-family="&quot;Liberation Sans&quot;, sans-serif" font-size="25.7" fill="#4a4d52" font-weight="700" textLength="194" lengthAdjust="spacingAndGlyphs">GROUP EVENTS</text>
<g fill="none" stroke="#45cbc4" stroke-width="2.4"><circle cx="3785" cy="681" r="11"/><line x1="3793" y1="689" x2="3803" y2="698"/></g>
<line x1="960" y1="746" x2="3840" y2="746" stroke="#454d5a" stroke-width="2"/>
<line x1="978" y1="816" x2="3769" y2="816" stroke="#454d5a" stroke-width="2"/>
<line x1="1053" y1="747" x2="1053" y2="815" stroke="#2b333e" stroke-width="2"/>
<line x1="1539" y1="747" x2="1539" y2="815" stroke="#2b333e" stroke-width="2"/>
<line x1="1687" y1="747" x2="1687" y2="815" stroke="#2b333e" stroke-width="2"/>
<line x1="1948" y1="747" x2="1948" y2="815" stroke="#2b333e" stroke-width="2"/>
<line x1="2209" y1="747" x2="2209" y2="815" stroke="#2b333e" stroke-width="2"/>
<line x1="2470" y1="747" x2="2470" y2="815" stroke="#2b333e" stroke-width="2"/>
<line x1="2730" y1="747" x2="2730" y2="815" stroke="#2b333e" stroke-width="2"/>
<line x1="2990" y1="747" x2="2990" y2="815" stroke="#2b333e" stroke-width="2"/>
<line x1="3252" y1="747" x2="3252" y2="815" stroke="#2b333e" stroke-width="2"/>
<line x1="3513" y1="747" x2="3513" y2="815" stroke="#2b333e" stroke-width="2"/>
<rect x="3770.0" y="748.0" width="69" height="69" fill="none" stroke="#3d4550" stroke-width="2"/>
<polygon points="3815.9,782.0 3818.7,784.7 3817.9,787.4 3814.1,788.1 3812.7,789.7 3812.8,793.6 3810.4,794.9 3807.1,792.7 3805.0,792.9 3802.3,795.7 3799.6,794.9 3798.9,791.1 3797.3,789.7 3793.4,789.8 3792.1,787.4 3794.3,784.1 3794.1,782.0 3791.3,779.3 3792.1,776.6 3795.9,775.9 3797.3,774.3 3797.2,770.4 3799.6,769.1 3802.9,771.3 3805.0,771.1 3807.7,768.3 3810.4,769.1 3811.1,772.9 3812.7,774.3 3816.6,774.2 3817.9,776.6 3815.7,779.9" fill="none" stroke="#45cbc4" stroke-width="2.2" stroke-linejoin="round"/><circle cx="3805" cy="782" r="5.3" fill="none" stroke="#45cbc4" stroke-width="2.2"/>
<rect x="1000" y="770.5" width="20" height="19.5" fill="none" stroke="#aeb2b7" stroke-width="2.4"/>
<text x="1070" y="789.5" font-family="&quot;Liberation Sans&quot;, sans-serif" font-size="26.0" fill="#b4b8be" font-weight="700" textLength="230" lengthAdjust="spacingAndGlyphs">COLLECTION TIME</text>
<text x="1556" y="789.5" font-family="&quot;Liberation Sans&quot;, sans-serif" font-size="26.0" fill="#b4b8be" font-weight="700" textLength="62" lengthAdjust="spacingAndGlyphs">TYPE</text>
<text x="1704" y="789.5" font-family="&quot;Liberation Sans&quot;, sans-serif" font-size="26.0" fill="#b4b8be" font-weight="700" textLength="176" lengthAdjust="spacingAndGlyphs">SERVICE TYPE</text>
<text x="1965" y="792" font-family="&quot;Liberation Sans&quot;, sans-serif" font-size="26.0" fill="#b4b8be" font-weight="700" textLength="174" lengthAdjust="spacingAndGlyphs">ORIGINATIN...</text>
<text x="2225" y="789.5" font-family="&quot;Liberation Sans&quot;, sans-serif" font-size="26.0" fill="#b4b8be" font-weight="700" textLength="178" lengthAdjust="spacingAndGlyphs">SOURCE IP A...</text>
<text x="2486" y="789.5" font-family="&quot;Liberation Sans&quot;, sans-serif" font-size="26.0" fill="#b4b8be" font-weight="700" textLength="173" lengthAdjust="spacingAndGlyphs">DESTINATIO...</text>
<text x="2746" y="789.5" font-family="&quot;Liberation Sans&quot;, sans-serif" font-size="26.0" fill="#b4b8be" font-weight="700" textLength="184" lengthAdjust="spacingAndGlyphs">TCP DESTINA...</text>
<text x="3008" y="789.5" font-family="&quot;Liberation Sans&quot;, sans-serif" font-size="26.0" fill="#b4b8be" font-weight="700" textLength="173" lengthAdjust="spacingAndGlyphs">DESTINATIO...</text>
<text x="3268" y="792" font-family="&quot;Liberation Sans&quot;, sans-serif" font-size="26.0" fill="#b4b8be" font-weight="700" textLength="171" lengthAdjust="spacingAndGlyphs">HOSTNAME ...</text>
<text x="3529" y="789.5" font-family="&quot;Liberation Sans&quot;, sans-serif" font-size="26.0" fill="#b4b8be" font-weight="700" textLength="183" lengthAdjust="spacingAndGlyphs">SOURCE COU...</text>
<rect x="1002" y="848.3" width="20" height="19.5" fill="none" stroke="#aeb2b7" stroke-width="2.4"/>
<text x="1072.5" y="869.0" font-family="&quot;Liberation Sans&quot;, sans-serif" font-size="27.7" fill="#e0e2e5" textLength="300" lengthAdjust="spacingAndGlyphs">08/08/2024 05:24:28 pm</text>
<g fill="none" stroke="#d9dcdf" stroke-width="2.1" stroke-linecap="round"><path d="M1565.5 872.6 Q1570.5 871.0 1570.5 866.0 V847.0 Q1570.5 843.4 1574 843.4 H1590.5 Q1593.5 843.4 1593.5 846.4 V849.0 Q1593.5 851.6 1590.5 851.6 H1588 M1588 843.6 V867.0 Q1588 872.6 1582.5 872.6 H1565.5"/><line x1="1573.8" y1="848.1" x2="1577.6" y2="848.1"/><line x1="1574.6" y1="853.0" x2="1583.2" y2="853.0"/><line x1="1574.6" y1="858.0" x2="1583.2" y2="858.0"/><line x1="1574.6" y1="863.0" x2="1583.2" y2="863.0"/><line x1="1574.6" y1="867.9" x2="1579.5" y2="867.9"/></g>
<line x1="978" y1="905" x2="3827" y2="905" stroke="#4b5361" stroke-width="2"/>
<rect x="1002" y="938.0999999999999" width="20" height="19.5" fill="none" stroke="#aeb2b7" stroke-width="2.4"/>
<text x="1072.5" y="958.8" font-family="&quot;Liberation Sans&quot;, sans-serif" font-size="27.7" fill="#e0e2e5" textLength="300" lengthAdjust="spacingAndGlyphs">08/08/2024 05:24:28 pm</text>
<g fill="none" stroke="#d9dcdf" stroke-width="2.1" stroke-linecap="round"><path d="M1565.5 962.4 Q1570.5 960.8 1570.5 955.8 V936.8 Q1570.5 933.2 1574 933.2 H1590.5 Q1593.5 933.2 1593.5 936.2 V938.8 Q1593.5 941.4 1590.5 941.4 H1588 M1588 933.4 V956.8 Q1588 962.4 1582.5 962.4 H1565.5"/><line x1="1573.8" y1="937.9" x2="1577.6" y2="937.9"/><line x1="1574.6" y1="942.8" x2="1583.2" y2="942.8"/><line x1="1574.6" y1="947.8" x2="1583.2" y2="947.8"/><line x1="1574.6" y1="952.8" x2="1583.2" y2="952.8"/><line x1="1574.6" y1="957.7" x2="1579.5" y2="957.7"/></g>
<line x1="978" y1="995" x2="3827" y2="995" stroke="#4b5361" stroke-width="2"/>
<rect x="1002" y="1027.8999999999999" width="20" height="19.5" fill="none" stroke="#aeb2b7" stroke-width="2.4"/>
<text x="1072.5" y="1048.6" font-family="&quot;Liberation Sans&quot;, sans-serif" font-size="27.7" fill="#e0e2e5" textLength="300" lengthAdjust="spacingAndGlyphs">08/08/2024 05:24:28 pm</text>
<g fill="none" stroke="#d9dcdf" stroke-width="2.1" stroke-linecap="round"><path d="M1565.5 1052.2 Q1570.5 1050.6 1570.5 1045.6 V1026.6 Q1570.5 1023.0 1574 1023.0 H1590.5 Q1593.5 1023.0 1593.5 1026.0 V1028.6 Q1593.5 1031.2 1590.5 1031.2 H1588 M1588 1023.2 V1046.6 Q1588 1052.2 1582.5 1052.2 H1565.5"/><line x1="1573.8" y1="1027.7" x2="1577.6" y2="1027.7"/><line x1="1574.6" y1="1032.6" x2="1583.2" y2="1032.6"/><line x1="1574.6" y1="1037.6" x2="1583.2" y2="1037.6"/><line x1="1574.6" y1="1042.6" x2="1583.2" y2="1042.6"/><line x1="1574.6" y1="1047.5" x2="1579.5" y2="1047.5"/></g>
<line x1="978" y1="1085" x2="3827" y2="1085" stroke="#4b5361" stroke-width="2"/>
<rect x="1002" y="1117.6999999999998" width="20" height="19.5" fill="none" stroke="#aeb2b7" stroke-width="2.4"/>
<text x="1072.5" y="1138.4" font-family="&quot;Liberation Sans&quot;, sans-serif" font-size="27.7" fill="#e0e2e5" textLength="300" lengthAdjust="spacingAndGlyphs">08/08/2024 05:24:28 pm</text>
<g fill="none" stroke="#d9dcdf" stroke-width="2.1" stroke-linecap="round"><path d="M1565.5 1142.0 Q1570.5 1140.4 1570.5 1135.4 V1116.4 Q1570.5 1112.8 1574 1112.8 H1590.5 Q1593.5 1112.8 1593.5 1115.8 V1118.4 Q1593.5 1121.0 1590.5 1121.0 H1588 M1588 1113.0 V1136.4 Q1588 1142.0 1582.5 1142.0 H1565.5"/><line x1="1573.8" y1="1117.5" x2="1577.6" y2="1117.5"/><line x1="1574.6" y1="1122.4" x2="1583.2" y2="1122.4"/><line x1="1574.6" y1="1127.4" x2="1583.2" y2="1127.4"/><line x1="1574.6" y1="1132.4" x2="1583.2" y2="1132.4"/><line x1="1574.6" y1="1137.3" x2="1579.5" y2="1137.3"/></g>
<line x1="978" y1="1174" x2="3827" y2="1174" stroke="#4b5361" stroke-width="2"/>
<rect x="1002" y="1207.5" width="20" height="19.5" fill="none" stroke="#aeb2b7" stroke-width="2.4"/>
<text x="1072.5" y="1228.2" font-family="&quot;Liberation Sans&quot;, sans-serif" font-size="27.7" fill="#e0e2e5" textLength="300" lengthAdjust="spacingAndGlyphs">08/08/2024 05:24:28 pm</text>
<g fill="none" stroke="#d9dcdf" stroke-width="2.1" stroke-linecap="round"><path d="M1565.5 1231.8 Q1570.5 1230.2 1570.5 1225.2 V1206.2 Q1570.5 1202.6 1574 1202.6 H1590.5 Q1593.5 1202.6 1593.5 1205.6 V1208.2 Q1593.5 1210.8 1590.5 1210.8 H1588 M1588 1202.8 V1226.2 Q1588 1231.8 1582.5 1231.8 H1565.5"/><line x1="1573.8" y1="1207.3" x2="1577.6" y2="1207.3"/><line x1="1574.6" y1="1212.2" x2="1583.2" y2="1212.2"/><line x1="1574.6" y1="1217.2" x2="1583.2" y2="1217.2"/><line x1="1574.6" y1="1222.2" x2="1583.2" y2="1222.2"/><line x1="1574.6" y1="1227.1" x2="1579.5" y2="1227.1"/></g>
<line x1="978" y1="1264" x2="3827" y2="1264" stroke="#4b5361" stroke-width="2"/>
<rect x="1002" y="1297.3" width="20" height="19.5" fill="none" stroke="#aeb2b7" stroke-width="2.4"/>
<text x="1072.5" y="1318.0" font-family="&quot;Liberation Sans&quot;, sans-serif" font-size="27.7" fill="#e0e2e5" textLength="300" lengthAdjust="spacingAndGlyphs">08/08/2024 05:24:28 pm</text>
<g fill="none" stroke="#d9dcdf" stroke-width="2.1" stroke-linecap="round"><path d="M1565.5 1321.6 Q1570.5 1320.0 1570.5 1315.0 V1296.0 Q1570.5 1292.4 1574 1292.4 H1590.5 Q1593.5 1292.4 1593.5 1295.4 V1298.0 Q1593.5 1300.6 1590.5 1300.6 H1588 M1588 1292.6 V1316.0 Q1588 1321.6 1582.5 1321.6 H1565.5"/><line x1="1573.8" y1="1297.1" x2="1577.6" y2="1297.1"/><line x1="1574.6" y1="1302.0" x2="1583.2" y2="1302.0"/><line x1="1574.6" y1="1307.0" x2="1583.2" y2="1307.0"/><line x1="1574.6" y1="1312.0" x2="1583.2" y2="1312.0"/><line x1="1574.6" y1="1316.9" x2="1579.5" y2="1316.9"/></g>
<line x1="978" y1="1354" x2="3827" y2="1354" stroke="#4b5361" stroke-width="2"/>
<rect x="1002" y="1387.1" width="20" height="19.5" fill="none" stroke="#aeb2b7" stroke-width="2.4"/>
<text x="1072.5" y="1407.8" font-family="&quot;Liberation Sans&quot;, sans-serif" font-size="27.7" fill="#e0e2e5" textLength="300" lengthAdjust="spacingAndGlyphs">08/08/2024 05:24:28 pm</text>
<g fill="none" stroke="#d9dcdf" stroke-width="2.1" stroke-linecap="round"><path d="M1565.5 1411.4 Q1570.5 1409.8 1570.5 1404.8 V1385.8 Q1570.5 1382.2 1574 1382.2 H1590.5 Q1593.5 1382.2 1593.5 1385.2 V1387.8 Q1593.5 1390.4 1590.5 1390.4 H1588 M1588 1382.4 V1405.8 Q1588 1411.4 1582.5 1411.4 H1565.5"/><line x1="1573.8" y1="1386.9" x2="1577.6" y2="1386.9"/><line x1="1574.6" y1="1391.8" x2="1583.2" y2="1391.8"/><line x1="1574.6" y1="1396.8" x2="1583.2" y2="1396.8"/><line x1="1574.6" y1="1401.8" x2="1583.2" y2="1401.8"/><line x1="1574.6" y1="1406.7" x2="1579.5" y2="1406.7"/></g>
<line x1="978" y1="1444" x2="3827" y2="1444" stroke="#4b5361" stroke-width="2"/>
<rect x="1002" y="1476.9" width="20" height="19.5" fill="none" stroke="#aeb2b7" stroke-width="2.4"/>
<text x="1072.5" y="1497.6" font-family="&quot;Liberation Sans&quot;, sans-serif" font-size="27.7" fill="#e0e2e5" textLength="300" lengthAdjust="spacingAndGlyphs">08/08/2024 05:24:28 pm</text>
<g fill="none" stroke="#d9dcdf" stroke-width="2.1" stroke-linecap="round"><path d="M1565.5 1501.2 Q1570.5 1499.6 1570.5 1494.6 V1475.6 Q1570.5 1472.0 1574 1472.0 H1590.5 Q1593.5 1472.0 1593.5 1475.0 V1477.6 Q1593.5 1480.2 1590.5 1480.2 H1588 M1588 1472.2 V1495.6 Q1588 1501.2 1582.5 1501.2 H1565.5"/><line x1="1573.8" y1="1476.7" x2="1577.6" y2="1476.7"/><line x1="1574.6" y1="1481.6" x2="1583.2" y2="1481.6"/><line x1="1574.6" y1="1486.6" x2="1583.2" y2="1486.6"/><line x1="1574.6" y1="1491.6" x2="1583.2" y2="1491.6"/><line x1="1574.6" y1="1496.5" x2="1579.5" y2="1496.5"/></g>
<line x1="978" y1="1534" x2="3827" y2="1534" stroke="#4b5361" stroke-width="2"/>
<rect x="1002" y="1566.6999999999998" width="20" height="19.5" fill="none" stroke="#aeb2b7" stroke-width="2.4"/>
<text x="1072.5" y="1587.4" font-family="&quot;Liberation Sans&quot;, sans-serif" font-size="27.7" fill="#e0e2e5" textLength="300" lengthAdjust="spacingAndGlyphs">08/08/2024 05:24:28 pm</text>
<g fill="none" stroke="#d9dcdf" stroke-width="2.1" stroke-linecap="round"><path d="M1565.5 1591.0 Q1570.5 1589.4 1570.5 1584.4 V1565.4 Q1570.5 1561.8 1574 1561.8 H1590.5 Q1593.5 1561.8 1593.5 1564.8 V1567.4 Q1593.5 1570.0 1590.5 1570.0 H1588 M1588 1562.0 V1585.4 Q1588 1591.0 1582.5 1591.0 H1565.5"/><line x1="1573.8" y1="1566.5" x2="1577.6" y2="1566.5"/><line x1="1574.6" y1="1571.4" x2="1583.2" y2="1571.4"/><line x1="1574.6" y1="1576.4" x2="1583.2" y2="1576.4"/><line x1="1574.6" y1="1581.4" x2="1583.2" y2="1581.4"/><line x1="1574.6" y1="1586.3" x2="1579.5" y2="1586.3"/></g>
<line x1="978" y1="1623" x2="3827" y2="1623" stroke="#4b5361" stroke-width="2"/>
<rect x="1002" y="1656.5" width="20" height="19.5" fill="none" stroke="#aeb2b7" stroke-width="2.4"/>
<text x="1072.5" y="1677.1999999999998" font-family="&quot;Liberation Sans&quot;, sans-serif" font-size="27.7" fill="#e0e2e5" textLength="300" lengthAdjust="spacingAndGlyphs">08/08/2024 05:24:28 pm</text>
<g fill="none" stroke="#d9dcdf" stroke-width="2.1" stroke-linecap="round"><path d="M1565.5 1680.8 Q1570.5 1679.2 1570.5 1674.2 V1655.2 Q1570.5 1651.6 1574 1651.6 H1590.5 Q1593.5 1651.6 1593.5 1654.6 V1657.2 Q1593.5 1659.8 1590.5 1659.8 H1588 M1588 1651.8 V1675.2 Q1588 1680.8 1582.5 1680.8 H1565.5"/><line x1="1573.8" y1="1656.3" x2="1577.6" y2="1656.3"/><line x1="1574.6" y1="1661.2" x2="1583.2" y2="1661.2"/><line x1="1574.6" y1="1666.2" x2="1583.2" y2="1666.2"/><line x1="1574.6" y1="1671.2" x2="1583.2" y2="1671.2"/><line x1="1574.6" y1="1676.1" x2="1579.5" y2="1676.1"/></g>
<line x1="978" y1="1713" x2="3827" y2="1713" stroke="#4b5361" stroke-width="2"/>
<rect x="3827" y="818" width="13" height="38" fill="#2c3541" rx="6"/>
<rect x="960" y="1727" width="1993" height="16" fill="#2f3946" rx="8"/>
<g>
<rect x="869.0" y="1050.5" width="451" height="618.5" fill="#161f2f" stroke="#19a9a9" stroke-width="2"/>
<text x="905" y="1097" font-family="&quot;Liberation Sans&quot;, sans-serif" font-size="27.6" fill="#e1e4e7" textLength="237" lengthAdjust="spacingAndGlyphs">Append EXISTS Drill</text>
<text x="905" y="1169" font-family="&quot;Liberation Sans&quot;, sans-serif" font-size="27.6" fill="#e1e4e7" textLength="370" lengthAdjust="spacingAndGlyphs">Append EXISTS Drill in New Tab</text>
<text x="905" y="1241" font-family="&quot;Liberation Sans&quot;, sans-serif" font-size="27.6" fill="#e1e4e7" textLength="246" lengthAdjust="spacingAndGlyphs">Append !EXISTS Drill</text>
<text x="905" y="1313" font-family="&quot;Liberation Sans&quot;, sans-serif" font-size="27.6" fill="#e1e4e7" textLength="380" lengthAdjust="spacingAndGlyphs">Append !EXISTS Drill in New Tab</text>
<line x1="873" y1="1355.5" x2="1316" y2="1355.5" stroke="#9a9fa5" stroke-width="2"/>
<text x="905" y="1418.5" font-family="&quot;Liberation Sans&quot;, sans-serif" font-size="27.6" fill="#e1e4e7" textLength="231" lengthAdjust="spacingAndGlyphs">Open Only This Key</text>
<text x="905" y="1490" font-family="&quot;Liberation Sans&quot;, sans-serif" font-size="27.6" fill="#e1e4e7" textLength="142.5" lengthAdjust="spacingAndGlyphs">Copy Values</text>
<text x="905" y="1561.5" font-family="&quot;Liberation Sans&quot;, sans-serif" font-size="27.6" fill="#e1e4e7" textLength="198.5" lengthAdjust="spacingAndGlyphs">Show Debug Info</text>
<rect x="868" y="1584" width="453" height="79" fill="#0f898b"/>
<defs><linearGradient id="hsh" x1="0" y1="0" x2="0" y2="1"><stop offset="0" stop-color="#000" stop-opacity="0.55"/><stop offset="1" stop-color="#000" stop-opacity="0"/></linearGradient></defs>
<rect x="868" y="1582" width="453" height="8" fill="url(#hsh)"/>
<line x1="869" y1="1584" x2="869" y2="1663" stroke="#19a9a9" stroke-width="2"/>
<line x1="868" y1="1662" x2="1321" y2="1662" stroke="#19a9a9" stroke-width="2"/>
<text x="905" y="1634" font-family="&quot;Liberation Sans&quot;, sans-serif" font-size="27.6" fill="#e1e4e7" textLength="203" lengthAdjust="spacingAndGlyphs">Show Max Values</text>
</g>
<rect x="1219" y="1666.5" width="343" height="60.5" fill="#ffffff" stroke="#9aa0a6" stroke-width="1"/>
<text x="1237.5" y="1707.2" font-family="&quot;Liberation Sans&quot;, sans-serif" font-size="28.0" fill="#333a40" textLength="302" lengthAdjust="spacingAndGlyphs">Show Max (100) Values</text>
<defs><filter id="shd" x="-10%" y="-30%" width="120%" height="160%"><feGaussianBlur stdDeviation="3"/></filter></defs>
<rect x="859" y="1584" width="488" height="89" fill="none" stroke="#000000" stroke-opacity="0.45" stroke-width="5" filter="url(#shd)"/>
<rect x="857.5" y="1580.5" width="485" height="87" fill="none" stroke="#ee3f3f" stroke-width="5"/>
</svg></body></html>
